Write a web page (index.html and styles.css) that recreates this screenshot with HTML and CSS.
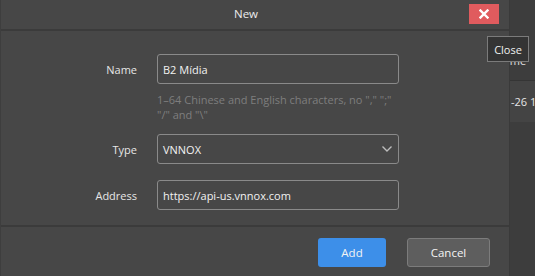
FILE: index.html
```html
<!DOCTYPE html>
<html lang="en">
<head>
    <meta charset="UTF-8">
    <title>New</title>
    <link rel="stylesheet" href="styles.css">
</head>
<body>
    <div class="screen">
        <div class="dialog">
            <div class="titlebar">
                <span class="title">New</span>
                <button class="close-btn" aria-label="Close">
                    <svg width="10" height="10" viewBox="0 0 10 10">
                        <path d="M1.5 1.5 L8.5 8.5 M8.5 1.5 L1.5 8.5" stroke="#fff" stroke-width="2.4" stroke-linecap="square"/>
                    </svg>
                </button>
            </div>

            <div class="dialog-body">
                <div class="form-row">
                    <label>Name</label>
                    <div class="field">B2 Mídia</div>
                </div>
                <div class="hint">1–64 Chinese and English characters, no "," ";" "/" and "\"</div>

                <div class="form-row type-row">
                    <label>Type</label>
                    <div class="field select">
                        <span>VNNOX</span>
                        <svg width="12" height="8" viewBox="0 0 12 8">
                            <path d="M1.5 1.5 L6 6 L10.5 1.5" fill="none" stroke="#bdbdbd" stroke-width="1.4"/>
                        </svg>
                    </div>
                </div>

                <div class="form-row address-row">
                    <label>Address</label>
                    <div class="field">https://api-us.vnnox.com</div>
                </div>
            </div>

            <div class="dialog-footer">
                <button class="btn btn-primary">Add</button>
                <button class="btn btn-default">Cancel</button>
            </div>
        </div>

        <div class="app-behind">
            <div class="app-head"><span>ime</span></div>
            <div class="app-row">-26 1</div>
        </div>
    </div>

    <div class="tooltip">Close</div>
</body>
</html>
```

FILE: styles.css
```css
* {
    margin: 0;
    padding: 0;
    box-sizing: border-box;
}

body {
    font-family: "Open Sans", "Noto Sans", sans-serif;
    font-size: 11px;
    background: #3c3c3c;
    color: #e6e6e6;
    width: 535px;
    height: 276px;
    overflow: hidden;
    position: relative;
}

.screen {
    display: flex;
    height: 276px;
}

.dialog {
    width: 510px;
    flex: none;
    background: #474747;
    border-left: 1px solid #3e3e3e;
    border-right: 1px solid #3a3a3a;
    display: flex;
    flex-direction: column;
}

.titlebar {
    height: 31px;
    border-bottom: 2px solid #3b3b3b;
    display: flex;
    align-items: center;
    justify-content: center;
    position: relative;
    padding-right: 18px;
}

.title {
    font-size: 11.5px;
    color: #ececec;
    margin-top: -2px;
}

.close-btn {
    position: absolute;
    top: 4px;
    right: 10px;
    width: 30px;
    height: 20px;
    border: none;
    background: #e05b5e;
    display: flex;
    align-items: center;
    justify-content: center;
}

.dialog-body {
    padding: 23px 0 0 56px;
    height: 196px;
    border-bottom: 2px solid #3b3b3b;
}

.form-row {
    display: flex;
    align-items: center;
    gap: 20px;
}

.form-row label {
    width: 80px;
    text-align: right;
    color: #e6e6e6;
}

.field {
    width: 242px;
    height: 30px;
    border: 1px solid #8a8a8a;
    border-radius: 3px;
    padding: 0 5px;
    display: flex;
    align-items: center;
    color: #f2f2f2;
}

.select {
    justify-content: space-between;
    padding-right: 5px;
}

.hint {
    margin: 8px 0 0 100px;
    width: 245px;
    line-height: 15px;
    color: #7e7e7e;
}

.type-row {
    margin-top: 12px;
}

.address-row {
    margin-top: 16px;
}

.dialog-footer {
    flex: 1;
    display: flex;
    justify-content: flex-end;
    align-items: flex-start;
    gap: 21px;
    padding: 11px 19px 0 0;
}

.btn {
    height: 29px;
    border-radius: 3px;
    font-family: inherit;
    font-size: 11.5px;
    color: #f4f4f4;
}

.btn-primary {
    width: 68px;
    background: #3d8fe9;
    border: none;
}

.btn-default {
    width: 83px;
    background: #5e5e5e;
    border: 1px solid #7c7c7c;
}

.app-behind {
    flex: 1;
    background: #3d3d3d;
    display: flex;
    flex-direction: column;
}

.app-head {
    height: 81px;
    border-bottom: 1px solid #353535;
    display: flex;
    align-items: flex-end;
    padding-bottom: 12px;
    overflow: hidden;
    color: #e0e0e0;
    white-space: nowrap;
}

.app-head span {
    margin-left: -3px;
}

.app-row {
    height: 41px;
    background: #444444;
    color: #e6e6e6;
    display: flex;
    align-items: center;
    white-space: nowrap;
    overflow: hidden;
    padding-left: 1px;
}

.tooltip {
    position: absolute;
    left: 487px;
    top: 36px;
    width: 42px;
    height: 26px;
    background: #343434;
    border: 1px solid #7b7b7b;
    color: #f0f0f0;
    display: flex;
    align-items: center;
    justify-content: center;
}
```
